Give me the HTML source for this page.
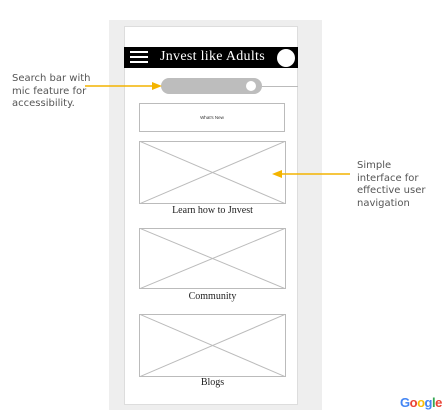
<!DOCTYPE html>
<html><head><style>
body{margin:0;width:447px;height:420px;background:#fff;position:relative;overflow:hidden;font-family:"Liberation Sans",sans-serif}
.a{position:absolute}
.ser{font-family:"Liberation Serif",serif;color:#222}
.note{font-family:"DejaVu Sans",sans-serif;font-size:10px;color:#555;line-height:12.5px}
</style></head><body>
<div class="a" style="left:109px;top:20px;width:213px;height:390px;background:#eeeeee"></div>
<div class="a" style="left:124px;top:26px;width:174px;height:379px;background:#fff;border:1px solid #ddd;box-sizing:border-box"></div>
<div class="a" style="left:124px;top:47px;width:174px;height:21px;background:#000"></div>
<div class="a" style="left:130px;top:51px;width:18px;height:2px;background:#fff;box-shadow:0 5px 0 #fff,0 10px 0 #fff"></div>
<div class="a ser" style="left:160px;top:49px;color:#fff;font-size:14px;letter-spacing:0.3px">Jnvest like Adults</div>
<div class="a" style="left:277px;top:49px;width:18px;height:18px;border-radius:50%;background:#fff"></div>
<div class="a" style="left:262px;top:86px;width:36px;height:1px;background:#bbb"></div>
<div class="a" style="left:161px;top:78px;width:101px;height:16px;border-radius:8px;background:#bdbdbd"></div>
<div class="a" style="left:246px;top:81px;width:10px;height:10px;border-radius:50%;background:#fff"></div>
<div class="a" style="left:139px;top:103px;width:146px;height:29px;border:1px solid #bbb;box-sizing:border-box;font-size:4.5px;text-align:center;line-height:27px;color:#333">What's New</div>
<svg class="a" style="left:139px;top:141px" width="147" height="63"><rect x="0.5" y="0.5" width="146" height="62" fill="none" stroke="#bbb"/><path d="M0 0L147 63M0 63L147 0" stroke="#bbb" stroke-width="1"/></svg>
<div class="a ser" style="left:139px;top:205px;width:147px;text-align:center;font-size:10px">Learn how to Jnvest</div>
<svg class="a" style="left:139px;top:228px" width="147" height="61"><rect x="0.5" y="0.5" width="146" height="60" fill="none" stroke="#bbb"/><path d="M0 0L147 61M0 61L147 0" stroke="#bbb"/></svg>
<div class="a ser" style="left:139px;top:291px;width:147px;text-align:center;font-size:10px">Community</div>
<svg class="a" style="left:139px;top:314px" width="147" height="63"><rect x="0.5" y="0.5" width="146" height="62" fill="none" stroke="#bbb"/><path d="M0 0L147 63M0 63L147 0" stroke="#bbb"/></svg>
<div class="a ser" style="left:139px;top:377px;width:147px;text-align:center;font-size:10px">Blogs</div>
<div class="a note" style="left:12px;top:73px">Search bar with<br>mic feature for<br>accessibility.</div>
<svg class="a" style="left:80px;top:80px" width="90" height="12"><path d="M5 6H75" stroke="#f4b400" stroke-width="1.5"/><path d="M72 2L82 6L72 10Z" fill="#f4b400"/></svg>
<div class="a note" style="left:357px;top:160px">Simple<br>interface for<br>effective user<br>navigation</div>
<svg class="a" style="left:270px;top:168px" width="85" height="12"><path d="M8 6H80" stroke="#f4b400" stroke-width="1.5"/><path d="M12 2L2 6L12 10Z" fill="#f4b400"/></svg>
<div class="a" style="left:400px;top:395px;font-size:13px;font-weight:bold;letter-spacing:-0.5px"><span style="color:#4285f4">G</span><span style="color:#ea4335">o</span><span style="color:#fbbc05">o</span><span style="color:#4285f4">g</span><span style="color:#34a853">l</span><span style="color:#ea4335">e</span></div>
</body></html>
